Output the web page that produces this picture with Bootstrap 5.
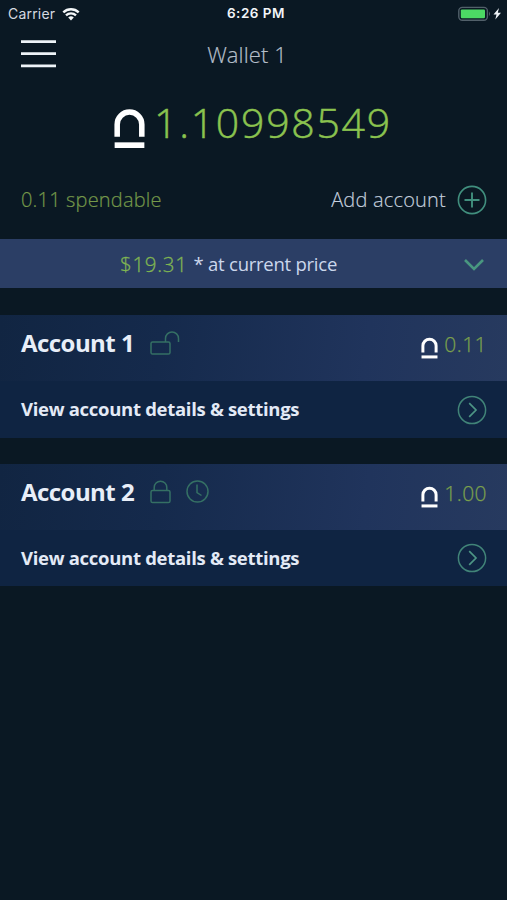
<!DOCTYPE html>
<html lang="en">
<head>
<meta charset="utf-8">
<meta name="viewport" content="width=device-width, initial-scale=1">
<title>Wallet 1</title>
<link href="https://cdn.jsdelivr.net/npm/bootstrap@5.3.0/dist/css/bootstrap.min.css" rel="stylesheet">
<style>
body{background:#0a1823;color:#e4ebf5;font-family:"Open Sans","Noto Sans",sans-serif;min-height:900px}
svg{display:block;flex:none}
button{color:inherit}
.t{white-space:nowrap;line-height:1}
.status{height:27px;padding:0 4px 0 8px;font-family:Inter,Roboto,sans-serif}
.carrier{font-size:14px;color:#d5dae0;letter-spacing:.2px}
.signal{margin-left:7px}
.clock{font-size:13.5px;font-weight:600;color:#f2f5f8;letter-spacing:.5px;padding-left:5px}
.top-bar{height:54px;padding:0 35px 0 21px}
.wallet-name{font-size:22px;font-weight:300;color:#b4bec9;letter-spacing:.1px;-webkit-text-stroke:.2px;padding-right:13px}
.balance{height:85px;padding:27px 0 0 114px}
.total{font-size:41px;font-weight:300;color:#8bc34f;letter-spacing:1.75px;margin:-6px 0 0 9px;-webkit-text-stroke:.5px}
.actions{height:73px;padding:0 20px 5px 21px}
.spendable{font-size:20px;font-weight:300;color:#75994a;letter-spacing:.18px;-webkit-text-stroke:.2px}
.add{font-size:20px;font-weight:300;color:#c5d0df;letter-spacing:.2px;margin-right:11px;-webkit-text-stroke:.15px}
.price{height:49px;background:#2b3e65;padding:2px 22px 0 120px}
.usd{font-size:20.5px;font-weight:300;color:#80b552;letter-spacing:.7px;-webkit-text-stroke:.3px}
.at{font-size:18.500px;color:#cbd7ec;margin-left:6px;letter-spacing:-.25px}
.account{margin-top:27px}
.account+.account{margin-top:26px}
.account-head{height:66px;padding:0 21px;background:linear-gradient(97deg,#112542 0%,#152a4c 32%,#20345c 72%,#273a5f 100%)}
.account-title{padding-bottom:11px}
.account-name{font-size:24px;font-weight:700;color:#e8eef8;letter-spacing:-.55px;width:113px}
.amount{font-size:21px;font-weight:300;color:#7ba04d;margin:-8px -1px 0 6px;letter-spacing:.45px;-webkit-text-stroke:.25px}
.flags{margin-left:16px;gap:15px}
.account-link{height:57px;background:#0f2442;padding:0 20px 0 21px}
.account+.account .account-link{height:56px}
.link-text{font-size:18.500px;font-weight:700;color:#e3eaf6;letter-spacing:-.3px}
</style>
<script src="https://cdn.jsdelivr.net/npm/bootstrap@5.3.0/dist/js/bootstrap.bundle.min.js"></script>
</head>
<body>
<svg width="0" height="0" class="position-absolute" aria-hidden="true">
  <symbol id="coin" viewBox="0 0 30 40"><path d="M3 28V16a12 12 0 0 1 24 0v12" fill="none" stroke="#fff" stroke-width="5.400"/><path d="M.5 33.500h29v5.500h-29z" fill="#fff"/></symbol>
  <symbol id="next" viewBox="0 0 30 30"><circle cx="15" cy="15" r="13.600" fill="none" stroke="#418478" stroke-width="1.500"/><path d="m12.200 8.200 6.800 6.800-6.800 6.800" fill="none" stroke="#4d9585" stroke-width="1.700"/></symbol>
</svg>
<div class="status d-flex align-items-center position-relative">
  <span class="t carrier">Carrier</span>
  <svg class="signal" width="18" height="14" viewBox="0 0 18 14" fill="none" stroke="#f3f6f8" stroke-width="2.400"><path d="M1.300 5.300a11.200 11.200 0 0 1 15.400 0M4 8.400a7.300 7.300 0 0 1 10 0"/><path d="m6.200 10.500a4.100 4.100 0 0 1 5.600 0L9 13.400z" fill="#f3f6f8" stroke="none"/></svg>
  <span class="t clock position-absolute start-50 translate-middle-x">6:26 PM</span>
  <svg class="ms-auto" width="45" height="16" viewBox="0 0 45 16"><rect x=".8" y="1.400" width="28.600" height="12.800" rx="3.500" fill="none" stroke="#52606a" stroke-width="1.400"/><rect x="2.800" y="3.400" width="24.200" height="8.800" rx="1.200" fill="#4cd964"/><path d="M31 5.500q2 2.300 0 4.600z" fill="#52606a"/><path d="M41 2 35.500 8.500h3l-1.200 5L43 6.800h-3.200z" fill="#eef3f7"/></svg>
</div>
<header class="top-bar d-flex align-items-center position-relative">
  <button class="btn p-0 border-0" aria-label="Menu"><svg width="35" height="30" viewBox="0 0 35 30"><path d="M0 2.600h35M0 14.600h35M0 26.800h35" stroke="#eef3f8" stroke-width="2.800"/></svg></button>
  <h1 class="t wallet-name m-0 position-absolute start-50 translate-middle-x">Wallet 1</h1>
</header>
<main>
  <div class="balance d-flex align-items-start">
    <svg width="31" height="41"><use href="#coin"/></svg>
    <span class="t total">1.10998549</span>
  </div>
  <div class="actions d-flex align-items-center justify-content-between">
    <span class="t spendable">0.11 spendable</span>
    <button class="btn p-0 border-0 d-flex align-items-center"><span class="t add">Add account</span>
      <svg width="30" height="30" viewBox="0 0 30 30" fill="none" stroke="#418f7e"><circle cx="15" cy="15" r="13.600" stroke-width="1.600"/><path d="M7.500 15h15M15 7.500v15" stroke-width="1.900"/></svg>
    </button>
  </div>
  <div class="price d-flex align-items-center">
    <span class="t usd">$19.31</span><span class="t at">* at current price</span>
    <svg class="ms-auto" width="22" height="14" viewBox="0 0 22 14"><path d="m2 2 9 9 9-9" fill="none" stroke="#499780" stroke-width="2.600"/></svg>
  </div>
  <section class="account">
    <div class="account-head d-flex align-items-center">
      <div class="account-title d-flex align-items-center">
        <h2 class="t account-name m-0">Account 1</h2>
        <div class="flags d-flex align-items-center"><svg width="30" height="26" viewBox="0 0 30 26" fill="none" stroke="#357064" stroke-width="1.500"><rect x="1" y="12" width="19" height="12" rx="1.600"/><path d="M15.500 12V8.500a6.500 6.500 0 0 1 13 0V12"/></svg></div>
      </div>
      <svg class="ms-auto" width="17" height="22"><use href="#coin"/></svg>
      <span class="t amount">0.11</span>
    </div>
    <a class="account-link d-flex align-items-center justify-content-between text-decoration-none" href="#"><span class="t link-text">View account details &amp; settings</span><svg width="30" height="30"><use href="#next"/></svg></a>
  </section>
  <section class="account">
    <div class="account-head d-flex align-items-center">
      <div class="account-title d-flex align-items-center">
        <h2 class="t account-name m-0">Account 2</h2>
        <div class="flags d-flex align-items-center">
          <svg width="21" height="26" viewBox="0 0 21 26" fill="none" stroke="#357064" stroke-width="1.500"><rect x="1" y="11.500" width="19" height="12" rx="1.600"/><path d="M4.200 11.500V8.500a6.300 6.300 0 0 1 12.600 0v3"/></svg>
          <svg width="23" height="23" viewBox="0 0 23 23" fill="none" stroke="#357064" stroke-width="1.500"><circle cx="11.500" cy="11.500" r="10.500"/><path d="M11 4.500v8l4.500 3"/></svg>
        </div>
      </div>
      <svg class="ms-auto" width="17" height="22"><use href="#coin"/></svg>
      <span class="t amount">1.00</span>
    </div>
    <a class="account-link d-flex align-items-center justify-content-between text-decoration-none" href="#"><span class="t link-text">View account details &amp; settings</span><svg width="30" height="30"><use href="#next"/></svg></a>
  </section>
</main>
</body>
</html>
